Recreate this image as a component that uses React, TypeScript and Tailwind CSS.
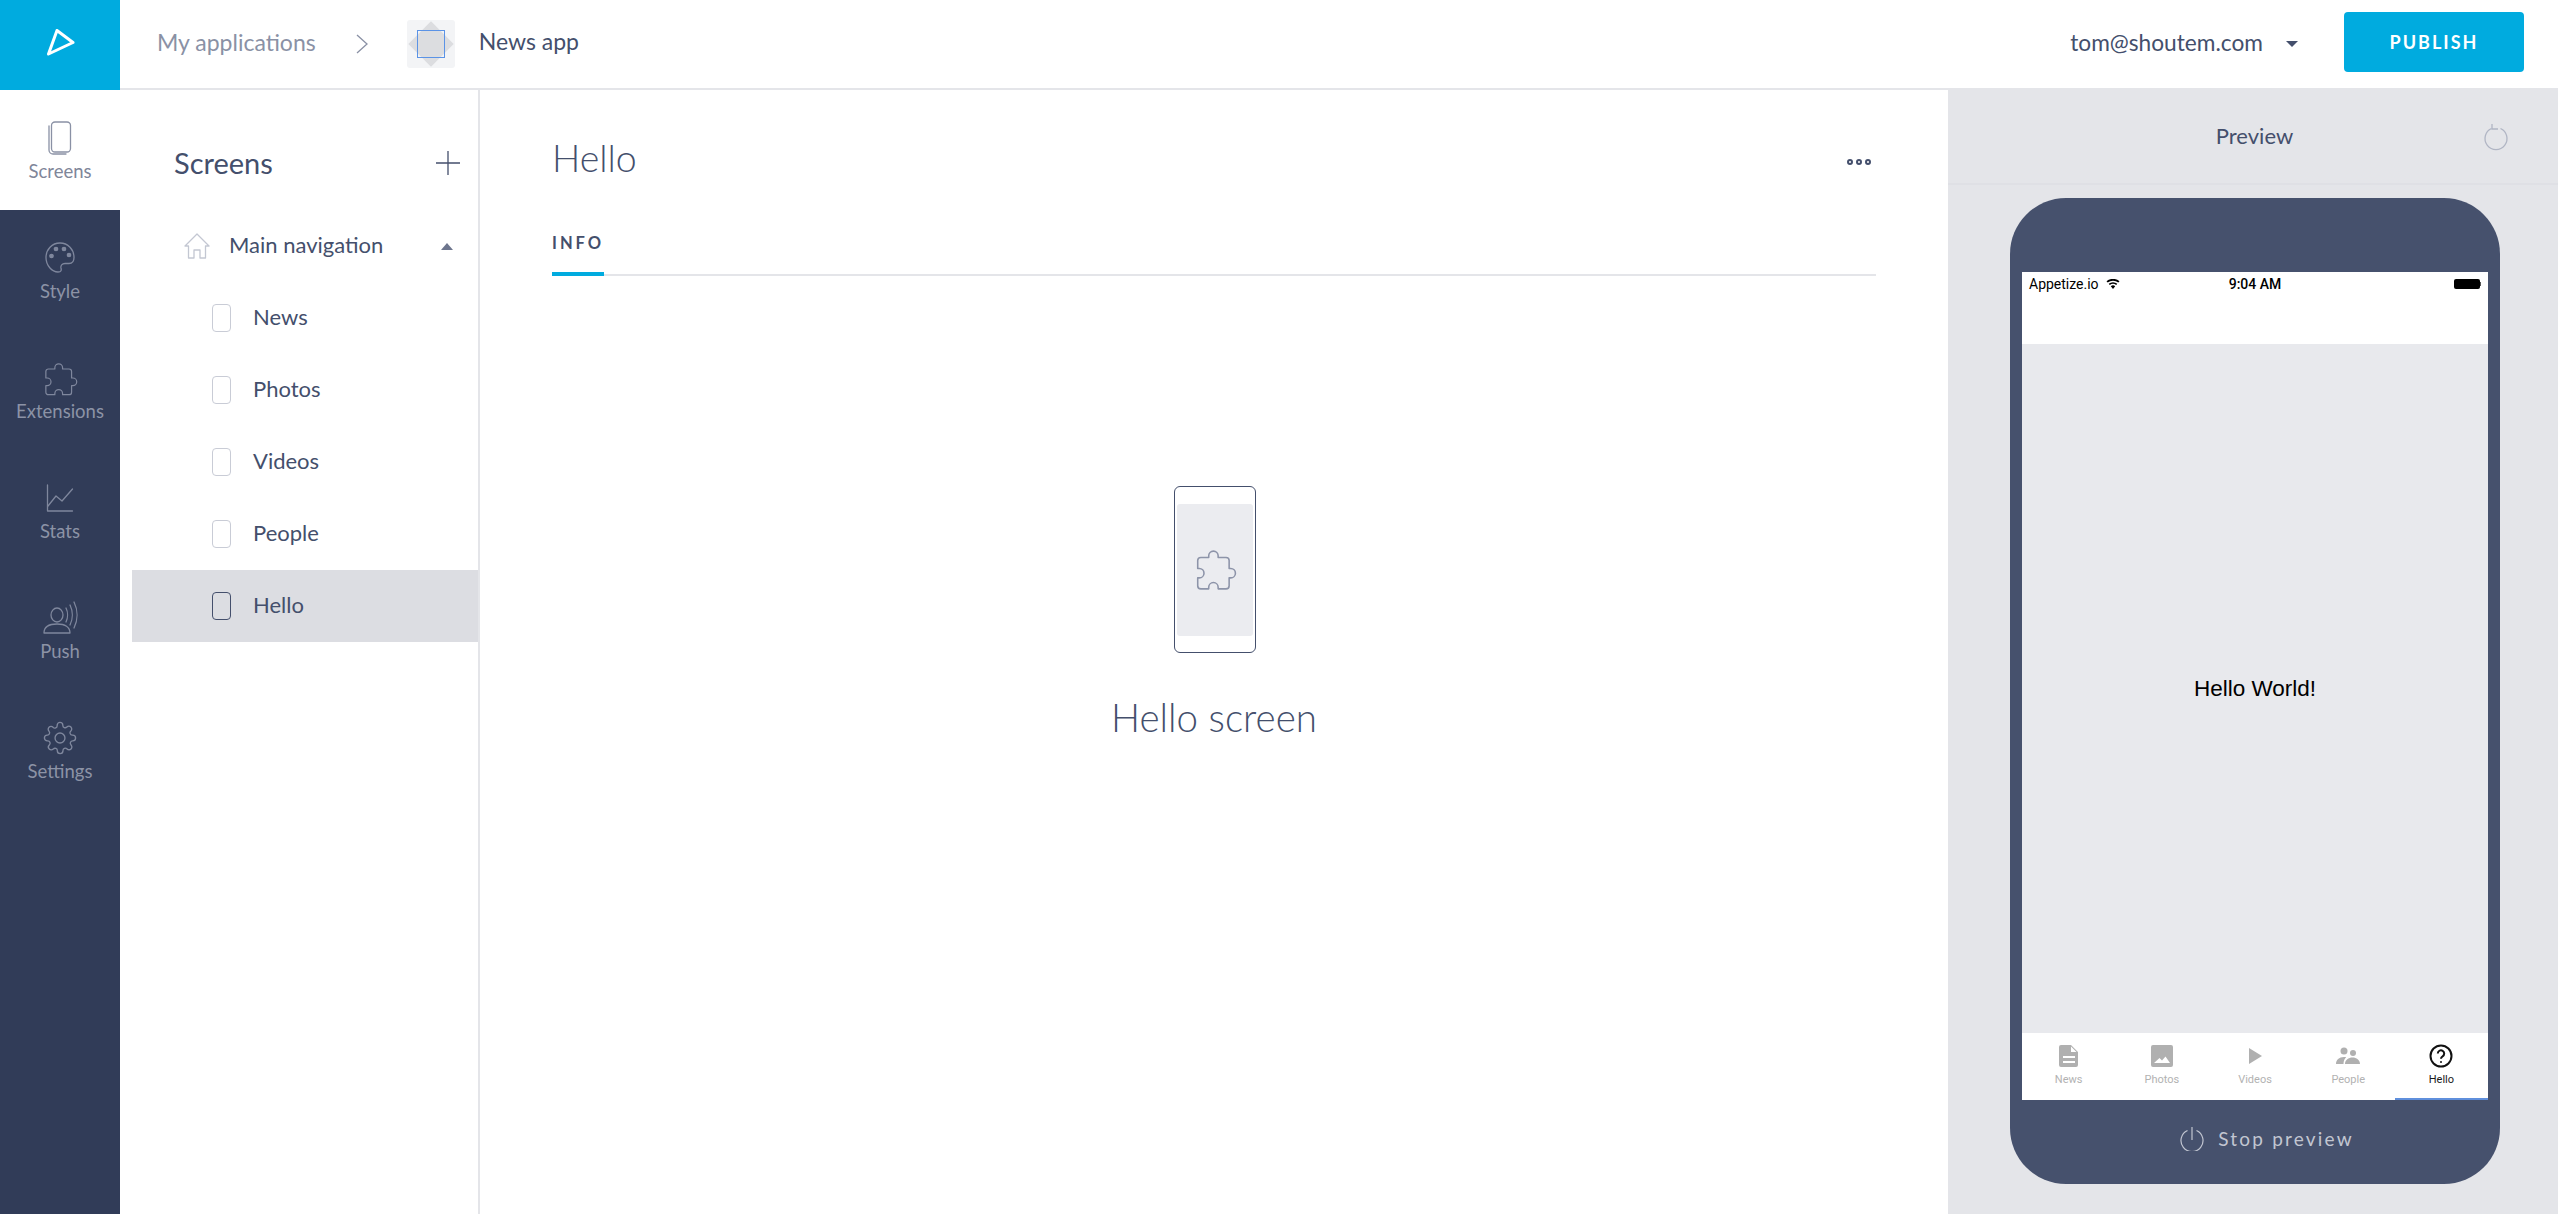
import React from "react";

const PUZZLE = "M12 3a3 3 0 0 1 3 3v1h5a2 2 0 0 1 2 2v5h1a3 3 0 0 1 0 6h-1v5a2 2 0 0 1-2 2h-5v-1a3 3 0 0 0-6 0v1H4a2 2 0 0 1-2-2v-5h1a3 3 0 0 0 0-6H2V9a2 2 0 0 1 2-2h5V6a3 3 0 0 1 3-3z";

function RailIcon({ name }: { name: string }) {
  const c = name === "Screens" ? "#8a91a5" : "#7f879d";
  const p = { fill: "none", stroke: c, strokeWidth: 1.3, strokeLinecap: "round" as const, strokeLinejoin: "round" as const };
  if (name === "Screens")
    return (
      <svg width="24" height="34" viewBox="0 0 24 34" {...p}>
        <rect x="3.5" y="1" width="19" height="30" rx="3.5" />
        <path d="M1 5v24a4 4 0 0 0 4 4h13" />
      </svg>
    );
  if (name === "Style")
    return (
      <svg width="32" height="34" viewBox="0 0 32 34" {...p}>
        <path d="M16 2C8 2 2 8.500 2 16.500S8 31 14 31c3.500 0 3.500-2 3-4-.5-2.500 1-4.500 4-4.500h4c3.500 0 5-2.500 5-6C30 8.500 24 2 16 2z" />
        <circle cx="7.500" cy="15" r="1.700" fill={c} />
        <circle cx="12" cy="8" r="1.700" fill={c} />
        <circle cx="20" cy="8" r="1.700" fill={c} />
        <circle cx="25" cy="14" r="1.700" fill={c} />
      </svg>
    );
  if (name === "Extensions")
    return (
      <svg width="36" height="36" viewBox="0 0 26 28" {...p} strokeWidth={0.95}>
        <path d={PUZZLE} />
      </svg>
    );
  if (name === "Stats")
    return (
      <svg width="28" height="28" viewBox="0 0 28 28" {...p}>
        <path d="M1.500 1v26h25" />
        <path d="M2 22l8-10 6 5L26.500 5" />
      </svg>
    );
  if (name === "Push")
    return (
      <svg width="36" height="34" viewBox="0 0 36 34" {...p}>
        <ellipse cx="15" cy="14" rx="6" ry="7" />
        <path d="M2 32c0-6 5-9 13-9s13 3 13 9z" />
        <path d="M24 7c2 4 2 10 0 14M28 4c3 6 3 14 0 20M32 1c4 8 4 18 0 26" />
      </svg>
    );
  return (
    <svg width="34" height="34" viewBox="0 0 24 24" {...p} strokeWidth={0.95}>
      <circle cx="12" cy="12" r="3.500" />
      <path d="M19.400 15a1.650 1.650 0 0 0 .33 1.820l.06.06a2 2 0 1 1-2.830 2.830l-.06-.06a1.650 1.650 0 0 0-2.800 1.170V21a2 2 0 1 1-4 0v-.09A1.650 1.650 0 0 0 7.300 19.700l-.06.06a2 2 0 1 1-2.830-2.830l.06-.06A1.650 1.650 0 0 0 3.300 14H3a2 2 0 1 1 0-4h.09A1.650 1.650 0 0 0 4.300 7.300l-.06-.06a2 2 0 1 1 2.830-2.830l.06.06A1.650 1.650 0 0 0 10 3.300V3a2 2 0 1 1 4 0v.09a1.650 1.650 0 0 0 2.800 1.170l.06-.06a2 2 0 1 1 2.830 2.830l-.06.06A1.650 1.650 0 0 0 20.700 10H21a2 2 0 1 1 0 4h-.09a1.650 1.650 0 0 0-1.510 1z" />
    </svg>
  );
}

function Rail() {
  const items = ["Screens", "Style", "Extensions", "Stats", "Push", "Settings"];
  return (
    <aside className="w-[120px] shrink-0 bg-[#313c58]">
      {items.map((n) => (
        <div
          key={n}
          className={`flex h-[120px] flex-col items-center ${n === "Screens" ? "bg-white text-[#7f8699]" : "text-[#8c93a6]"}`}
        >
          <div className="mt-[30px] flex h-[36px] items-center justify-center">
            <RailIcon name={n} />
          </div>
          <span className="mt-[3px] text-[18.500px] leading-[24px]">{n}</span>
        </div>
      ))}
    </aside>
  );
}

function PhoneGlyph({ active }: { active?: boolean }) {
  return (
    <span
      className={`h-[28px] w-[19px] rounded-[4px] border-[1.500px] ${active ? "border-[#444f6c]" : "border-[#c9ccd6]"}`}
    />
  );
}

function ScreensPanel() {
  const rows = ["News", "Photos", "Videos", "People", "Hello"];
  return (
    <section className="w-[360px] shrink-0 border-r-2 border-[#e4e5e9] pl-3">
      <div className="flex h-[120px] items-center justify-between pb-[10px] pl-[42px] pr-[18px] pt-[36px]">
        <h2 className="text-[29px] leading-[36px] font-normal">Screens</h2>
        <svg width="24" height="24" viewBox="0 0 24 24" fill="none" stroke="#444f6c" strokeWidth="1.300">
          <path d="M12 0v24M0 12h24" />
        </svg>
      </div>
      <div className="flex h-[72px] items-center pl-[52px] pr-[25px]">
        <svg width="26" height="26" viewBox="0 0 26 26" fill="none" stroke="#c3c7d2" strokeWidth="1.300" strokeLinejoin="round">
          <path d="M1 13L13 1l12 12h-3.500v12H16v-8h-6v8H4.500V13z" />
        </svg>
        <span className="ml-[19px] -mt-[3px] flex-1 text-[22px]">Main navigation</span>
        <span className="h-0 w-0 border-x-[6.500px] border-b-[7px] border-x-transparent border-b-[#6d758d]" />
      </div>
      {rows.map((r) => (
        <div
          key={r}
          className={`flex h-[72px] items-center gap-[22px] pl-[80px] ${r === "Hello" ? "bg-[#dcdde2]" : ""}`}
        >
          <PhoneGlyph active={r === "Hello"} />
          <span className="-mt-[3px] text-[22px]">{r}</span>
        </div>
      ))}
    </section>
  );
}

function MainPanel() {
  return (
    <main className="flex flex-1 flex-col px-[72px]">
      <div className="flex h-[93px] items-end justify-between">
        <h1 className="text-[37.500px] leading-[50px] font-light">Hello</h1>
        <div className="mb-[18px] mr-[5px] flex gap-[3px]">
          <span className="h-[6px] w-[6px] rounded-full border-[2px] border-[#444f6c]" />
          <span className="h-[6px] w-[6px] rounded-full border-[2px] border-[#444f6c]" />
          <span className="h-[6px] w-[6px] rounded-full border-[2px] border-[#444f6c]" />
        </div>
      </div>
      <div className="mt-[43px] flex h-[50px] border-b-2 border-[#e4e5e9]">
        <div className="-mb-[2px] h-[50px] w-[52px] border-b-4 border-[#00abdf] pt-[4px] text-center text-[16.500px] leading-[26px] font-bold tracking-[3px]">
          INFO
        </div>
      </div>
      <div className="flex flex-col items-center pt-[210px]">
        <div className="ml-[2px] flex h-[167px] w-[82px] items-center justify-center rounded-[6px] border-[1.500px] border-[#444f6c] px-[2px]">
          <div className="flex h-[132px] w-full items-center justify-center rounded-[3px] bg-[#ebecf0]">
            <svg width="44" height="44" viewBox="0 1 26 28" fill="none" stroke="#8d94a9" strokeWidth="1" strokeLinejoin="round">
              <path d={PUZZLE} />
            </svg>
          </div>
        </div>
        <p className="mt-[39px] text-[38.500px] leading-[50px] font-light">Hello screen</p>
      </div>
    </main>
  );
}

function Tab({ label, active, children }: { label: string; active?: boolean; children: React.ReactNode }) {
  return (
    <div
      className={`flex flex-1 flex-col items-center border-b-2 pt-[11px] ${active ? "border-[#5f8fdc] text-[#1a1a1a]" : "border-transparent text-[#b2b2b2]"}`}
    >
      <div className="flex h-[24px] items-center justify-center">{children}</div>
      <span className="mt-[4px] font-['Roboto',sans-serif] text-[11px] leading-[16px]">{label}</span>
    </div>
  );
}

function Preview() {
  return (
    <aside className="flex w-[610px] shrink-0 flex-col bg-[#e4e5e9]">
      <div className="relative flex h-[95px] shrink-0 items-center justify-center border-b-2 border-[#dfe0e5] pb-[2px] pl-[3px]">
        <span className="text-[22px]">Preview</span>
        <svg className="absolute right-[49px] top-[33px]" width="26" height="28" viewBox="0 0 26 28" fill="none" stroke="#b0b5c4" strokeWidth="1.300">
          <path d="M17.500 5.500a11 11 0 1 1-9 0" />
          <path d="M9 1v5h6" />
        </svg>
      </div>
      <div className="mx-[62px] mt-[13px] flex h-[986px] w-[490px] flex-col rounded-[56px] bg-[#46516d] px-[12px] pt-[74px]">
        <div className="flex h-[828px] flex-col bg-white">
          <div className="relative flex h-[72px] shrink-0 items-start justify-between px-[7px] pt-[3px] font-['Roboto',sans-serif] text-[14px] leading-[18px] text-black">
            <div className="flex items-center gap-[7px]">
              <span>Appetize.io</span>
              <svg width="14" height="10" viewBox="0 0 14 10">
                <path d="M7 10L4.800 7.300a3.300 3.300 0 0 1 4.400 0zM3.800 6.100l-1.100-1.300a6.500 6.500 0 0 1 8.600 0l-1.100 1.300a4.900 4.900 0 0 0-6.400 0zM1.700 3.600L.5 2.300a9.800 9.800 0 0 1 13 0l-1.200 1.300a8.100 8.100 0 0 0-10.600 0z" fill="#000" />
              </svg>
            </div>
            <span className="absolute left-0 right-0 top-[3px] text-center font-medium">9:04 AM</span>
            <div className="mt-[4px] flex items-center">
              <span className="h-[10px] w-[26px] rounded-[2px] bg-black" />
              <span className="h-[4px] w-[1.500px] bg-[#555]" />
            </div>
          </div>
          <div className="flex flex-1 items-center justify-center bg-[#e8e9ed] font-['Liberation_Sans',sans-serif] text-[22.500px] text-black">
            Hello World!
          </div>
          <div className="flex h-[67px] shrink-0">
            <Tab label="News">
              <svg width="20" height="24" viewBox="0 0 20 24" fill="#b0b0b0">
                <path d="M2 1h10l7 7v13a2 2 0 0 1-2 2H2a2 2 0 0 1-2-2V3a2 2 0 0 1 2-2zm2 11v2h12v-2zm0 5v2h12v-2zM12 2.500V8h5.500z" fillRule="evenodd" />
              </svg>
            </Tab>
            <Tab label="Photos">
              <svg width="22" height="22" viewBox="0 0 22 22" fill="#b0b0b0">
                <path d="M2 0h18a2 2 0 0 1 2 2v18a2 2 0 0 1-2 2H2a2 2 0 0 1-2-2V2a2 2 0 0 1 2-2zm1 18h16l-4.500-6.500-3.500 4-2.500-2.500z" fillRule="evenodd" />
              </svg>
            </Tab>
            <Tab label="Videos">
              <svg width="13" height="16" viewBox="0 0 13 16" fill="#b0b0b0">
                <path d="M0 0l13 8-13 8z" />
              </svg>
            </Tab>
            <Tab label="People">
              <svg width="24" height="18" viewBox="0 0 24 18" fill="#b0b0b0">
                <circle cx="8" cy="4" r="3.500" />
                <circle cx="17" cy="6" r="3" />
                <path d="M0 17c0-4 3-7 8-7 .8 0 1.600.1 2.200.3C8.500 12 7.500 14 7.500 17zM9 17c0-4 3.500-6.500 7.500-6.500S24 13 24 17z" />
              </svg>
            </Tab>
            <Tab label="Hello" active>
              <svg width="24" height="24" viewBox="0 0 24 24" fill="none" stroke="#111" strokeWidth="2">
                <circle cx="12" cy="12" r="10.500" />
                <path d="M8.800 9.500a3.200 3.200 0 1 1 4.800 2.800c-1 .6-1.600 1.200-1.600 2.400" />
                <circle cx="12" cy="18" r="1" fill="#111" stroke="none" />
              </svg>
            </Tab>
          </div>
        </div>
        <div className="flex flex-1 items-center justify-center gap-[14px] pb-[6px] pl-[24px] text-[#c2c6d1]">
          <svg width="24" height="24" viewBox="0 0 24 24" fill="none" stroke="#c2c6d1" strokeWidth="1.200">
            <path d="M7.500 3.500a11 11 0 1 0 9 0" />
            <path d="M12 0v13" />
          </svg>
          <span className="text-[19px] tracking-[2.200px]">Stop preview</span>
        </div>
      </div>
    </aside>
  );
}

export default function App() {
  return (
    <div className="flex h-[1214px] w-[2558px] flex-col overflow-hidden bg-white font-['Lato',sans-serif] text-[#444f6c]">
      <header className="flex h-[90px] shrink-0">
        <div className="flex w-[120px] items-center justify-center bg-[#00abdf]">
          <svg width="30" height="32" viewBox="0 0 30 32" fill="none" stroke="#fff" strokeWidth="3" strokeLinejoin="round">
            <path d="M12 1.500L28 13.500 3.500 25z" />
          </svg>
        </div>
        <div className="flex flex-1 items-center border-b-2 border-[#e4e5e9] pl-[37px] pr-[34px]">
          <span className="-mt-[3px] text-[23px] text-[#8a91a5]">My applications</span>
          <svg className="ml-[40px]" width="12" height="20" viewBox="0 0 12 20" fill="none" stroke="#8a91a5" strokeWidth="1.300">
            <path d="M1 1l10 9-10 9" />
          </svg>
          <div className="relative ml-[39px] flex h-[48px] w-[48px] items-center justify-center rounded-[3px] bg-[#f3f4f6]">
            <span className="absolute h-[32px] w-[32px] rotate-45 bg-[#dcdde0]" />
            <span className="absolute h-[28px] w-[28px] border-[1.500px] border-[#5b93e6]" />
          </div>
          <span className="ml-[24px] -mt-[6px] text-[23px]">News app</span>
          <span className="ml-auto -mt-[2px] text-[22.700px]">tom@shoutem.com</span>
          <span className="ml-[23px] h-0 w-0 border-x-[6px] border-t-[6px] border-x-transparent border-t-[#444f6c]" />
          <button className="mb-[4px] ml-[46px] h-[60px] w-[180px] rounded-[4px] bg-[#00abdf] text-[18px] font-bold tracking-[2px] text-white">
            PUBLISH
          </button>
        </div>
      </header>
      <div className="flex min-h-0 flex-1">
        <Rail />
        <ScreensPanel />
        <MainPanel />
        <Preview />
      </div>
    </div>
  );
}
